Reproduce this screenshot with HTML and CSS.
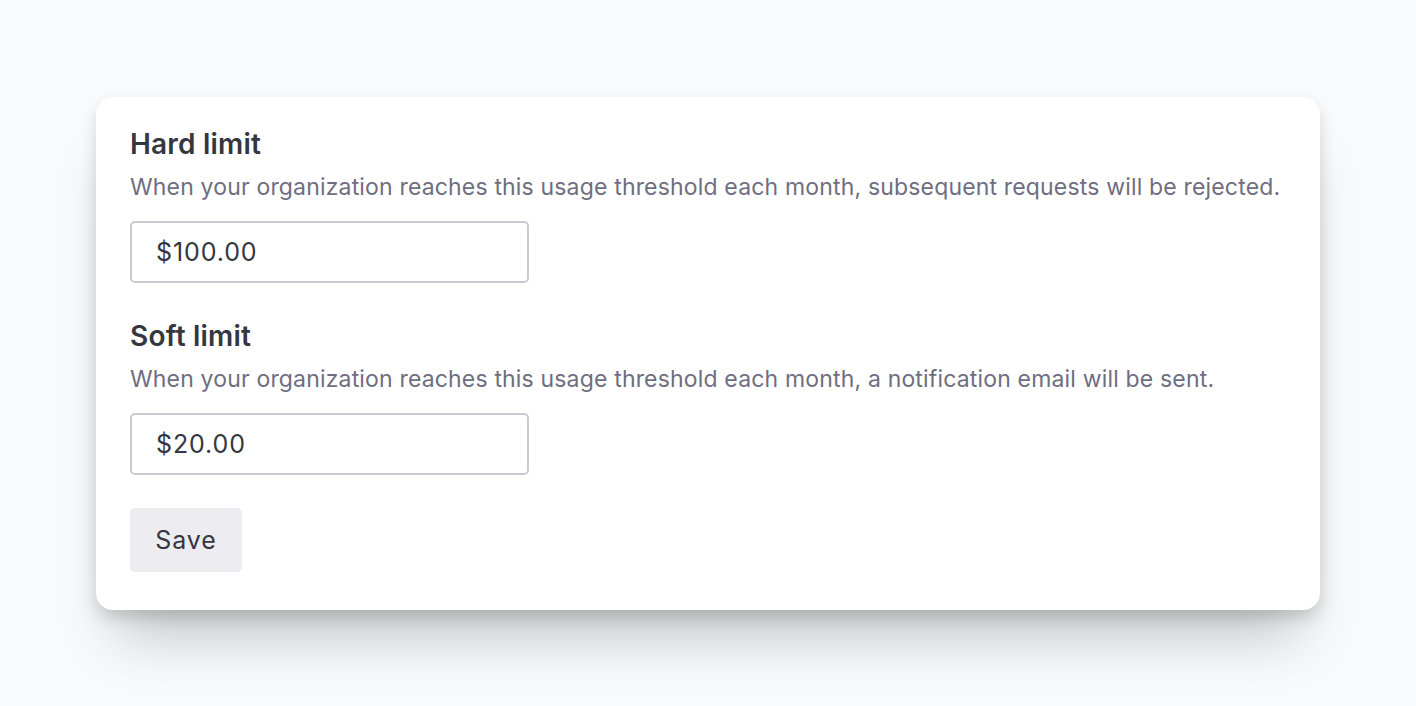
FILE: index.html
```html
<!DOCTYPE html>
<html lang="en">
<head>
    <meta charset="UTF-8">
    <title>Usage limits</title>
    <link rel="stylesheet" href="styles.css">
</head>
<body>
    <div class="limits-card">
        <div class="limit-field">
            <h2>Hard limit</h2>
            <p>When your organization reaches this usage threshold each month, subsequent requests will be rejected.</p>
            <input class="limit-input" type="text" value="$100.00">
        </div>

        <div class="limit-field">
            <h2>Soft limit</h2>
            <p>When your organization reaches this usage threshold each month, a notification email will be sent.</p>
            <input class="limit-input" type="text" value="$20.00">
        </div>

        <button class="save-btn">Save</button>
    </div>
</body>
</html>
```

FILE: styles.css
```css
* {
    margin: 0;
    padding: 0;
    box-sizing: border-box;
}

body {
    font-family: Inter, "Noto Sans", sans-serif;
    background: #f9fafb;
    color: #353740;
    padding: 97px 96px;
    min-height: 100vh;
}

.limits-card {
    background: #fff;
    border-radius: 17px;
    padding: 30px 34px 38px;
    box-shadow: 0 45px 55px -20px rgba(0, 0, 0, 0.22), 0 8px 16px rgba(0, 0, 0, 0.14);
}

.limit-field {
    margin-bottom: 36px;
}

.limit-field + .limit-field {
    margin-bottom: 33px;
}

.limit-field h2 {
    font-size: 28px;
    line-height: 34px;
    font-weight: 600;
    letter-spacing: 0.2px;
    color: #353740;
    margin-bottom: 11px;
}

.limit-field p {
    font-size: 23px;
    line-height: 30px;
    letter-spacing: 0.17px;
    color: #6e6e80;
    margin-bottom: 19px;
}

.limit-input {
    display: block;
    width: 399px;
    height: 62px;
    border: 2px solid #c9c9d3;
    border-radius: 5px;
    padding: 0 24px;
    font-family: inherit;
    font-size: 25px;
    letter-spacing: 0.9px;
    color: #353740;
    background: #fff;
}

.save-btn {
    display: block;
    width: 112px;
    height: 64px;
    border: none;
    border-radius: 5px;
    background: #ececf1;
    font-family: inherit;
    font-size: 25px;
    letter-spacing: 0.9px;
    color: #353740;
}
```
